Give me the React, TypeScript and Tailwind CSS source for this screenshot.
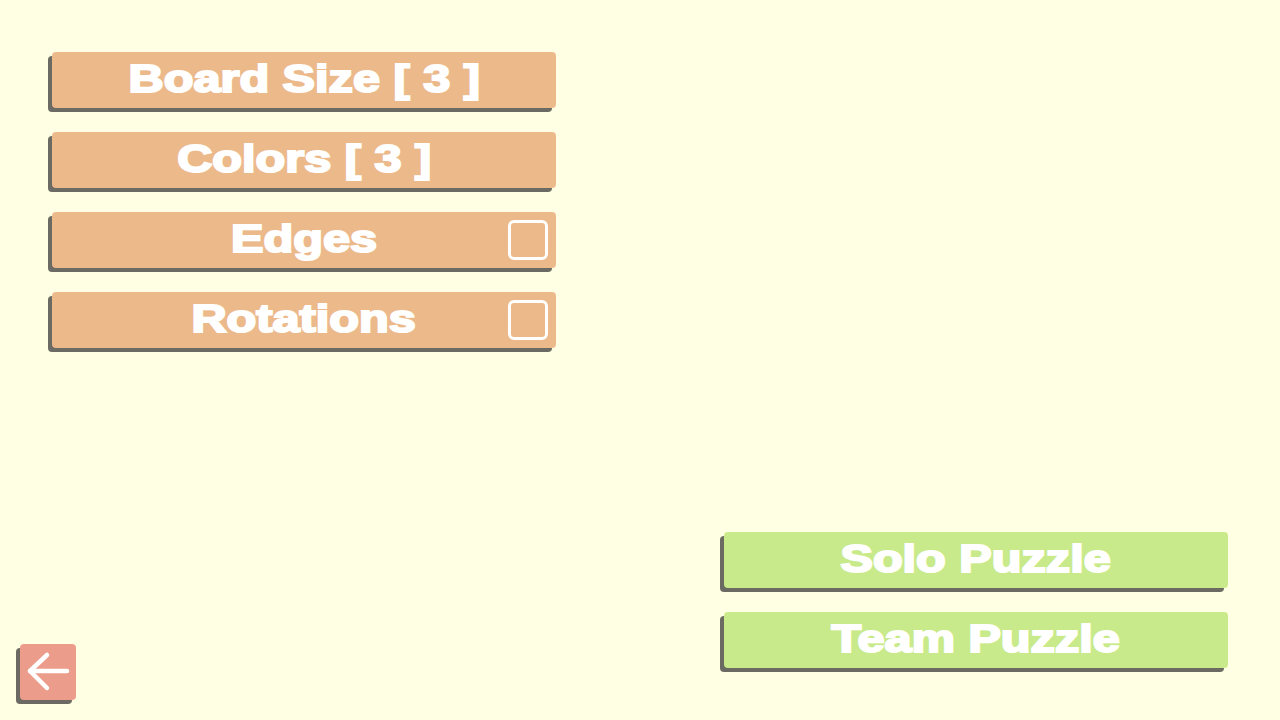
import React from "react";

const font = { fontFamily: '"Liberation Sans", Arial, sans-serif' };

function Label({ text }: { text: string }) {
  return (
    <span className="inline-block text-white font-bold text-[38px] leading-none pb-[3px] scale-x-[1.28] [-webkit-text-stroke:2px_white] whitespace-nowrap">
      {text}
    </span>
  );
}

function OrangeButton({ label, checkbox }: { label: string; checkbox?: boolean }) {
  return (
    <div className="relative w-[504px] h-[56px] rounded-[4px] bg-[#ecb98b] shadow-[-4px_4px_0_#6b6b63] flex items-center justify-center">
      <Label text={label} />
      {checkbox && (
        <div className="absolute right-[8px] top-[8px] w-[40px] h-[40px] rounded-[6px] border-[3px] border-white" />
      )}
    </div>
  );
}

function GreenButton({ label }: { label: string }) {
  return (
    <div className="w-[504px] h-[56px] rounded-[4px] bg-[#c8ea8b] shadow-[-4px_4px_0_#6b6b63] flex items-center justify-center">
      <Label text={label} />
    </div>
  );
}

export default function App() {
  return (
    <div className="w-[1280px] h-[720px] bg-[#ffffe4] flex flex-col overflow-hidden" style={font}>
      <div className="pt-[52px] pl-[52px] flex flex-col gap-[24px]">
        <OrangeButton label="Board Size [ 3 ]" />
        <OrangeButton label="Colors [ 3 ]" />
        <OrangeButton label="Edges" checkbox />
        <OrangeButton label="Rotations" checkbox />
      </div>
      <div className="flex-1" />
      <div className="flex items-end justify-between pl-[20px] pr-[52px] pb-[20px]">
        <div className="w-[56px] h-[56px] rounded-[4px] bg-[#ec9c8b] shadow-[-4px_4px_0_#6b6b63] flex items-center justify-center">
          <svg width="56" height="56" viewBox="0 0 56 56" fill="none" stroke="white" strokeWidth="4.5" strokeLinecap="round" strokeLinejoin="round">
            <path d="M47 27 H10" />
            <path d="M27 11 L10 27 L27 44" />
          </svg>
        </div>
        <div className="flex flex-col gap-[24px] mb-[32px]">
          <GreenButton label="Solo Puzzle" />
          <GreenButton label="Team Puzzle" />
        </div>
      </div>
    </div>
  );
}
